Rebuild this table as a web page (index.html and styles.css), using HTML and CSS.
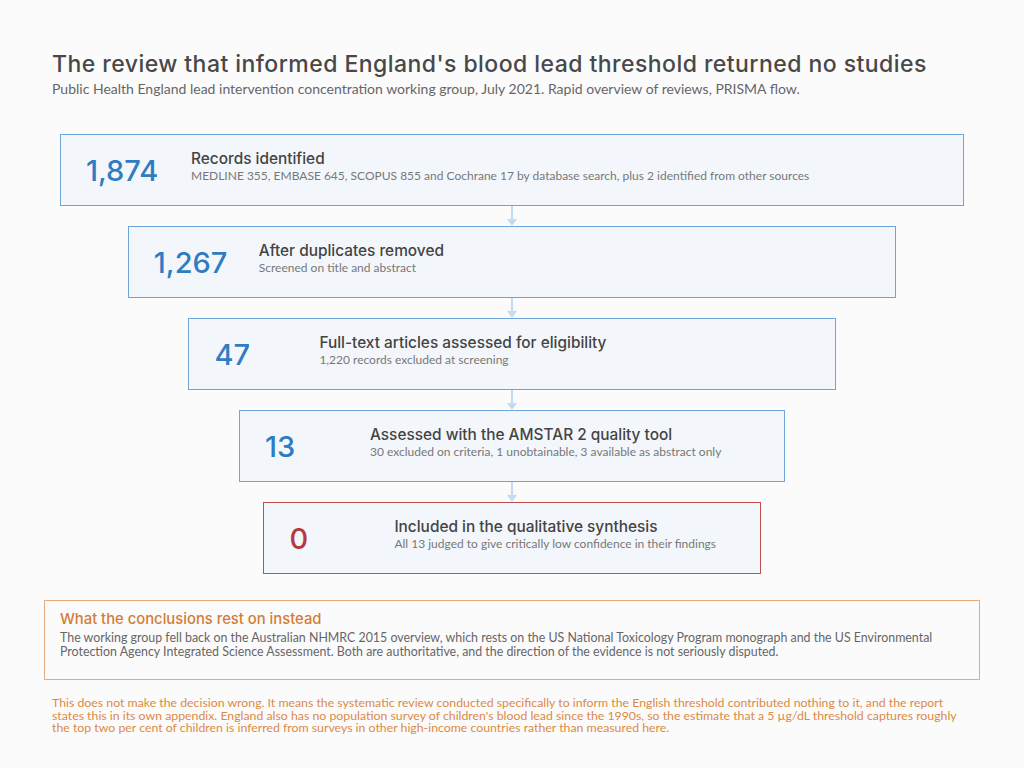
FILE: index.html
```html
<!DOCTYPE html>
<html lang="en">
<head>
<meta charset="utf-8">
<title>PRISMA flow</title>
<link rel="stylesheet" href="styles.css">
</head>
<body>
<div class="page">
  <header class="head">
    <h1 class="title">The review that informed England's blood lead threshold returned no studies</h1>
    <p class="sub">Public Health England lead intervention concentration working group, July 2021. Rapid overview of reviews, PRISMA flow.</p>
  </header>

  <section class="flow">
    <div class="box w1">
      <div class="num">1,874</div>
      <div class="txt">
        <div class="bt">Records identified</div>
        <div class="bs">MEDLINE 355, EMBASE 645, SCOPUS 855 and Cochrane 17 by database search, plus 2 identified from other sources</div>
      </div>
    </div>
    <div class="arrow"><span class="line"></span><span class="head-tri"></span></div>
    <div class="box w2">
      <div class="num">1,267</div>
      <div class="txt">
        <div class="bt">After duplicates removed</div>
        <div class="bs">Screened on title and abstract</div>
      </div>
    </div>
    <div class="arrow"><span class="line"></span><span class="head-tri"></span></div>
    <div class="box w3">
      <div class="num">47</div>
      <div class="txt">
        <div class="bt">Full-text articles assessed for eligibility</div>
        <div class="bs">1,220 records excluded at screening</div>
      </div>
    </div>
    <div class="arrow"><span class="line"></span><span class="head-tri"></span></div>
    <div class="box w4">
      <div class="num">13</div>
      <div class="txt">
        <div class="bt">Assessed with the AMSTAR 2 quality tool</div>
        <div class="bs">30 excluded on criteria, 1 unobtainable, 3 available as abstract only</div>
      </div>
    </div>
    <div class="arrow"><span class="line"></span><span class="head-tri"></span></div>
    <div class="box w5 final">
      <div class="num">0</div>
      <div class="txt">
        <div class="bt">Included in the qualitative synthesis</div>
        <div class="bs">All 13 judged to give critically low confidence in their findings</div>
      </div>
    </div>
  </section>

  <section class="callout">
    <h2 class="ct">What the conclusions rest on instead</h2>
    <p class="cb">The working group fell back on the Australian NHMRC 2015 overview, which rests on the US National Toxicology Program monograph and the US Environmental Protection Agency Integrated Science Assessment. Both are authoritative, and the direction of the evidence is not seriously disputed.</p>
  </section>

  <p class="note">This does not make the decision wrong. It means the systematic review conducted specifically to inform the English threshold contributed nothing to it, and the report states this in its own appendix. England also has no population survey of children's blood lead since the 1990s, so the estimate that a 5 µg/dL threshold captures roughly the top two per cent of children is inferred from surveys in other high-income countries rather than measured here.</p>
</div>
</body>
</html>
```

FILE: styles.css
```css
* { box-sizing: border-box; }
html, body { margin: 0; padding: 0; }
body {
  background: #fbfbfc;
  font-family: "Lato", "Liberation Sans", sans-serif;
  color: #444;
  width: 1024px;
  height: 768px;
  overflow: hidden;
}
.page {
  padding: 49px 44px 0 44px;
}
.head {
  padding-left: 8px;
}
.title {
  margin: 0;
  font-family: "Inter", "Open Sans", sans-serif;
  font-weight: 500;
  font-size: 23px;
  letter-spacing: 0.45px;
  line-height: 30px;
  color: #484848;
}
.sub {
  margin: 1px 0 0 0;
  font-size: 14px;
  line-height: 18px;
  color: #666;
}
.flow {
  margin: 36px 16px 0 16px;
  display: flex;
  flex-direction: column;
  align-items: center;
}
.box {
  height: 72px;
  background: #f3f7fc;
  border: 1.5px solid #6fa6da;
  display: flex;
  align-items: center;
}
.w1 { width: 100%; }
.w2 { width: 85%; }
.w3 { width: 71.6%; }
.w4 { width: 60.4%; }
.w5 { width: 55%; }
.num {
  flex: 0 0 130px;
  padding-left: 25px;
  font-family: "Inter", "Open Sans", sans-serif;
  font-weight: 500;
  font-size: 29px;
  color: #2f7cc2;
  margin-top: 1px;
}
.txt { margin-top: -9px; }
.bt {
  font-family: "Inter", "Open Sans", sans-serif;
  font-weight: 500;
  font-size: 15.4px;
  line-height: 19px;
  color: #444;
}
.bs {
  font-size: 12px;
  line-height: 15px;
  color: #777;
}
.final { border-color: #c05050; }
.final .num { color: #b83b3b; }
.arrow {
  height: 20px;
  display: flex;
  flex-direction: column;
  align-items: center;
}
.line {
  flex: 1;
  width: 2px;
  background: #c3dbf1;
}
.head-tri {
  width: 0;
  height: 0;
  border-left: 5px solid transparent;
  border-right: 5px solid transparent;
  border-top: 7px solid #c3dbf1;
}
.callout {
  margin-top: 26px;
  height: 80px;
  border: 1.5px solid #e2ab80;
  padding: 8px 15px 0 15px;
}
.ct {
  margin: 0;
  font-family: "Inter", "Open Sans", sans-serif;
  font-weight: 500;
  font-size: 14.8px;
  line-height: 20px;
  color: #d27d35;
}
.cb {
  margin: 2px 0 0 0;
  font-size: 12.4px;
  line-height: 13.5px;
  color: #666;
}
.note {
  margin: 17px 8px 0 8px;
  font-size: 12.3px;
  line-height: 12.6px;
  color: #db8a45;
}
```
